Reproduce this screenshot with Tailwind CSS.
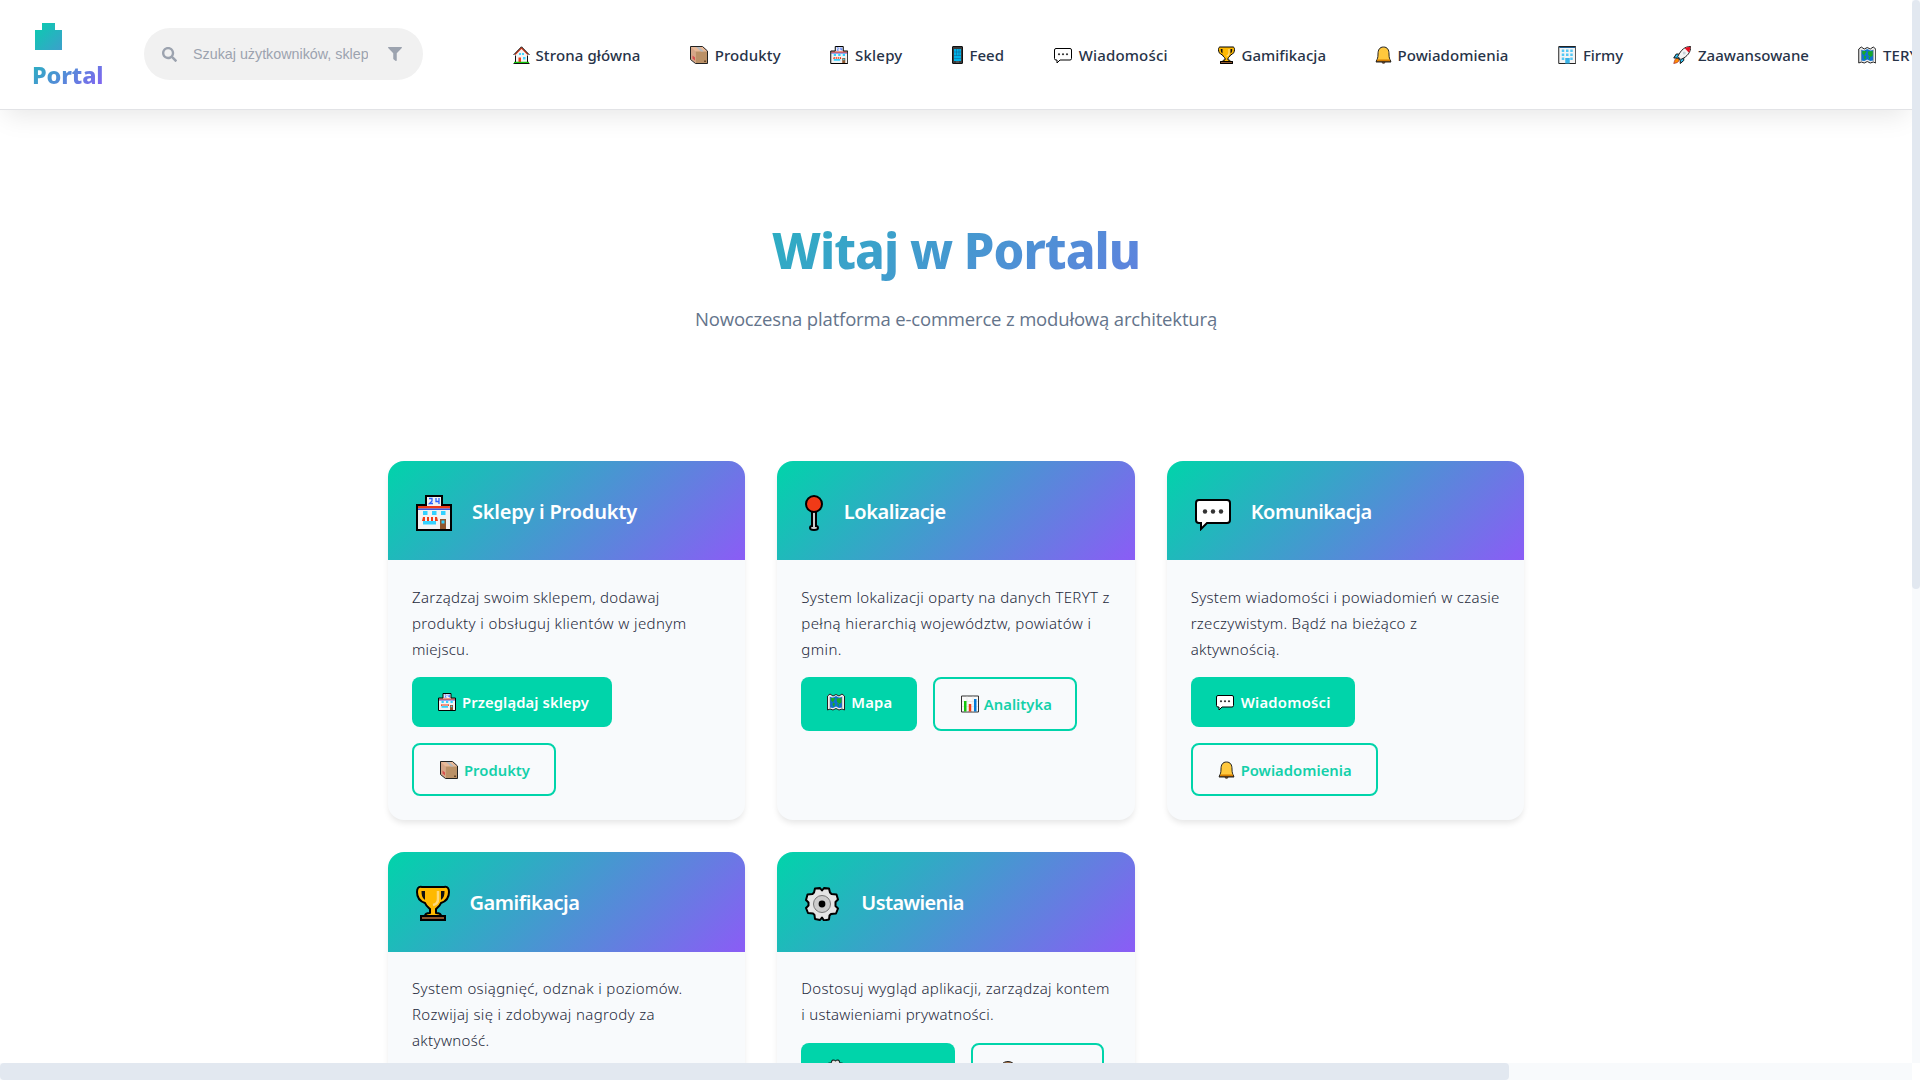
<!DOCTYPE html>
<html lang="pl">
<head>
<meta charset="utf-8">
<title>Portal</title>
<script src="https://cdn.jsdelivr.net/npm/@tailwindcss/browser@4"></script>
</head>
<body class="relative h-[1080px] w-[1920px] overflow-hidden bg-white font-['Open_Sans','Noto_Sans',sans-serif] text-[#1e293b]">

<svg class="hidden" xmlns="http://www.w3.org/2000/svg">
  <symbol id="home" viewBox="0 0 34 36">
    <path d="M5 16v17h24V16L17 4z" fill="#f4f4f4"/><path d="M11 23h5v10h-5z" fill="#f03a17"/><path d="M12 14h4v4h-4zM18 14h4v4h-4zM20 22h5v5h-5z" fill="#41d5ff"/>
    <path d="M2 33h30" stroke="#16c60c" stroke-width="3"/><path d="M4 17 17 4l13 13" fill="none" stroke="#d13415" stroke-width="2.5"/>
    <path d="M5 19v13M29 19v13M1 35h32M1 18 17 1.500l16 16.500" fill="none" stroke="#111" stroke-width="2"/>
  </symbol>
  <symbol id="box" viewBox="0 0 36 36">
    <path d="M1 1h24l10 9v25H12L1 26z" fill="#e8b998"/><path d="M11 11h24v24H11z" fill="#bb9167"/><path d="M1 1v25l10 8V11z" fill="#d6a688"/><path d="m12 2 10 9h6L18 2z" fill="#b4b9bd"/><path d="m5 19 5 4v6l-5-4z" fill="#d95050"/><path d="M28 29h4v3h-4z" fill="#6b4a2b"/>
    <path d="M1 1h24l10 9v25H11L1 27z" fill="none" stroke="#222" stroke-width="2"/>
  </symbol>
  <symbol id="shop" viewBox="0 0 36 36">
    <path d="M1 10h9V1h16v9h9v25H1z" fill="#f2f2f2"/><path d="M2 11h32v2.500H2z" fill="#f03a17"/><path d="M2 13.500h32v1.500H2z" fill="#3a55e0"/>
    <path d="M7 16h4.500v4H7zM16 16h4.500v4H16zM25 16h4.500v4H25zM7 26h13v3.500H7z" fill="#33d1ff"/>
    <path d="M7 22h2v4H6zM11 22h2v4h-2zM15 22h2v4h-2zM19 22h2l1 4h-3z" fill="#f03a17"/><path d="M24 24h6v10h-6z" fill="#8e562e"/><path d="M25.500 25.500h3v3h-3z" fill="#33d1ff"/>
    <path d="M13 3.500h3v2.500l-2.500 2.500H17M20 3v3.500h3.500M23 3v6" fill="none" stroke="#2962ff" stroke-width="1.300"/>
    <path d="M1 10h9V1h16v9h9v25H1z" fill="none" stroke="#000" stroke-width="2"/>
  </symbol>
  <symbol id="phone" viewBox="0 0 22 36">
    <rect x="1" y="1" width="20" height="34" rx="1" fill="#3b3b3b" stroke="#111" stroke-width="2"/><path d="M4 6h14v24H4z" fill="#00b4ea"/><path d="M4 12h14M4 19h14M4 25h14M9 6v13M14 6v13" stroke="#155a86" stroke-width="1"/><path d="M8 32h6" stroke="#999"/>
  </symbol>
  <symbol id="chat" viewBox="0 0 36 36">
    <path d="M4 5h28q3 0 3 3v17q0 3-3 3H12l-6 6v-6H4q-3 0-3-3V8q0-3 3-3z" fill="#fff" stroke="#000" stroke-width="2"/><g fill="#333"><circle cx="10" cy="16.500" r="2.200"/><circle cx="18" cy="16.500" r="2.200"/><circle cx="26" cy="16.500" r="2.200"/></g>
  </symbol>
  <symbol id="cup" viewBox="0 0 34 36">
    <path d="M6 2h22c4-1 5 2 5 5 0 5-2 9-8 11-1 3-4 5-5 6v4c3 0 5 1 5 3h4v4H5v-4h4c0-2 2-3 5-3v-4c-1-1-4-3-5-6C3 16 1 12 1 7c0-3 1-6 5-5z" fill="#ffb900" stroke="#000" stroke-width="2" stroke-linejoin="round"/>
    <path d="M5.500 6c0 4 .5 7 3.500 9V6zM28.500 6c0 4-.5 7-3.500 9V6z" fill="#111"/><path d="M22 6v8q0 5-5 6" fill="none" stroke="#ffd97a" stroke-width="2.500"/><path d="M5 31h24v4H5z" fill="#8e562e" stroke="#000" stroke-width="2"/>
  </symbol>
  <symbol id="bell" viewBox="0 0 34 36">
    <circle cx="17" cy="32" r="3" fill="#8e562e" stroke="#222"/><path d="M17 2c-8 0-11 6-11 14 0 7-1 10-4 15h30c-3-5-4-8-4-15 0-8-3-14-11-14z" fill="#ffc83d" stroke="#222" stroke-width="2" stroke-linejoin="round"/><path d="M3 31h28l-2-4H5z" fill="#d67d00"/><path d="M2 32h30" stroke="#222" stroke-width="2"/>
  </symbol>
  <symbol id="office" viewBox="0 0 36 36">
    <path d="M1 1h34v34H1z" fill="#f4f4f4" stroke="#222" stroke-width="2"/><path d="M2 3h32" stroke="#1b5f95" stroke-width="2"/><g fill="#55c8f5"><path d="M7 7h5v5H7zM15.500 7h5v5h-5zM24 7h5v5h-5zM7 15h5v5H7zM15.500 15h5v5h-5zM24 15h5v5h-5zM7 23h5v5H7zM24 23h5v5h-5z"/><path d="M14 24h9v11h-9z" fill="#3ab4e8"/></g>
  </symbol>
  <symbol id="rocket" viewBox="0 0 36 36">
    <path d="M9 24c-5 0-6 4-8 11 6-1 11-3 11-8z" fill="#ff8c00" stroke="#a33" stroke-width="1.500"/><path d="M10 16H6l-5 8h8l5 5v6l7-6v-6z" fill="#33c5f5" stroke="#111" stroke-width="2"/><path d="M35 1c-12 0-19 6-26 20l6 6C29 21 35 12 35 1z" fill="#f4f4f4" stroke="#222" stroke-width="2"/><path d="M34 2c-5 0-8 1-11 2.500L31 13c2-3 3-7 3-11z" fill="#e81224"/><circle cx="22" cy="14" r="3" fill="#c8d3da"/>
  </symbol>
  <symbol id="map" viewBox="0 0 36 36">
    <path d="m1 6 5-4 6 4 6-3 6 3 6-4 5 4v28l-5-2-6 2-6-3-6 3-6-2-5 2z" fill="#eee" stroke="#222" stroke-width="2"/><path d="m6 8 6 1 6-3 6 3 6-1v21l-6 1-6-3-6 3-6-1z" fill="#0f72d0"/><path d="M8 10h9l-3 5-2 4-4-4zM12 19l4 2-2 7-3-4zM19 11l10-1v9l-4 3-5-4zM20 21l4 1-1 6z" fill="#16a82c"/><path d="M6 7v23M30 7v23" stroke="#777"/>
  </symbol>
  <symbol id="chart" viewBox="0 0 36 36">
    <path d="M1 2h34v32H1z" fill="#fafafa" stroke="#333" stroke-width="2"/><path d="M2 13h32M2 23h32M12 2v32M24 2v32" stroke="#ddd"/><path d="M6 12h5v21H6z" fill="#16c60c"/><path d="M15.500 18h5v15h-5z" fill="#f03a17"/><path d="M26 8h5v25h-5z" fill="#0078d7"/>
  </symbol>
  <symbol id="pin" viewBox="0 0 18 36">
    <path d="M7 16v15q-2 0-2 2 0 2 4 2t4-2q0-2-2-2V16z" fill="#ccc" stroke="#000" stroke-width="2"/><circle cx="9" cy="9" r="8" fill="#f03a17" stroke="#000" stroke-width="2"/>
  </symbol>
  <symbol id="gear" viewBox="0 0 34 34">
    <path fill="#e5e5e5" stroke="#000" stroke-width="2" stroke-linejoin="round" d="M10 1.500 15 1l2 2.500L19 1l5 .5 1 4 1.500 1.500 5 .5 1.500 5-2.500 2.500v4l2.500 2.500-2 5-5 .5-1.500 1.500-.5 4-5 1L17 30.500 15 33l-5-1-.5-4L8 26.500l-5-.5-2-5L3.500 18.500v-3L1 13l1.500-5.500 5-.5L9 5.500z"/><circle cx="17" cy="17" r="8.500" fill="#ccc" stroke="#777"/><circle cx="17" cy="17" r="3.400" fill="#000"/>
  </symbol>
  <symbol id="palette" viewBox="0 0 36 36">
    <path d="M18 1C8 1 1 9 1 18s7 17 15 17c6 0 1-8 6-9h7c8-3 6-25-11-25z" fill="#a9754a" stroke="#222" stroke-width="2"/><circle cx="10" cy="14" r="3" fill="#0078d7"/><circle cx="20" cy="8" r="3" fill="#ffc83d"/>
  </symbol>
</svg>

<header class="relative z-10 flex h-[110px] w-[1912px] items-start overflow-visible border-b border-[#e2e3e6] bg-white shadow-[0_10px_25px_-5px_rgba(0,0,0,0.1)]">
  <a class="ml-8 mt-[21px] block w-[72px] shrink-0 bg-[linear-gradient(135deg,#00d4aa,#8b5cf6)] bg-clip-text text-transparent">
    <svg class="ml-[3px] mt-[2px] block h-[27px] w-[27px]" viewBox="0 0 27 27"><defs><linearGradient id="lg" gradientUnits="userSpaceOnUse" x1="-4" y1="-4" x2="67" y2="67"><stop stop-color="#00d4aa"/><stop offset="1" stop-color="#8b5cf6"/></linearGradient></defs><path d="M7 0h13v7h7v20H0V7h7z" fill="url(#lg)"/></svg>
    <span data-w="71.500" class="mt-[7px] inline-block font-['Noto_Sans','Open_Sans',sans-serif] text-[23.500px] leading-[36px] font-extrabold whitespace-nowrap">Portal</span>
  </a>
  <div class="ml-10 mt-7 flex h-[52px] w-[279px] shrink-0 items-center rounded-[26px] bg-[#f1f1f1] pl-[18px] text-[#9ca3af]">
    <svg class="h-[15px] w-[15px] shrink-0" viewBox="0 0 512 512" fill="currentColor"><path d="M505 442.700 405.300 343c-4.500-4.500-10.600-7-17-7H372c27.600-35.300 44-79.700 44-128C416 93.100 322.900 0 208 0S0 93.100 0 208s93.100 208 208 208c48.300 0 92.700-16.400 128-44v16.300c0 6.400 2.500 12.500 7 17l99.700 99.700c9.400 9.400 24.600 9.400 33.900 0l28.300-28.300c9.400-9.400 9.400-24.600.1-34zM208 336c-70.700 0-128-57.200-128-128 0-70.700 57.200-128 128-128 70.700 0 128 57.200 128 128 0 70.700-57.200 128-128 128z"/></svg>
    <span class="ml-[16px] block w-[175px] overflow-hidden pt-px font-['Liberation_Sans',Arial,sans-serif] text-[14.300px] whitespace-nowrap">Szukaj użytkowników, sklepów</span>
    <svg class="ml-[20px] h-[14px] w-[14px] shrink-0" viewBox="0 0 512 512" fill="currentColor"><path d="M488 0H24C2.700 0-8 25.900 7 41l185 185v206c0 7.800 3.800 15.200 10.200 19.700l80 56C298 518.700 320 507.500 320 488V226L505 41c15-15 4.400-41-17-41z"/></svg>
  </div>
  <nav id="nav" class="ml-[89.700px] mt-[41px] flex h-7 w-[1399px] items-center overflow-hidden font-['Noto_Sans','Open_Sans',sans-serif] text-[15px] font-medium whitespace-nowrap text-[#273348]"></nav>
</header>

<main class="mx-auto flex w-[1136px] -translate-x-1 flex-col">
  <section class="flex h-[351px] flex-col items-center px-8 pt-[102px]">
    <h1 class="w-full bg-[linear-gradient(135deg,#00d4aa,#8b5cf6)] bg-clip-text text-center font-['Noto_Sans','Open_Sans',sans-serif] text-[49px] leading-[77px] font-extrabold whitespace-nowrap text-transparent"><span data-w="368" class="inline-block">Witaj w Portalu</span></h1>
    <p data-w="522" class="mt-[14px] text-[18.500px] leading-[31px] whitespace-nowrap text-[#64748b]">Nowoczesna platforma e-commerce z modułową architekturą</p>
  </section>
  <section id="cards" class="grid grid-cols-3 gap-8"></section>
</main>

<div class="absolute top-0 right-0 z-20 h-[1063px] w-2 bg-[#f8fafc]"><div class="h-[589px] rounded-sm bg-[#e2e8f0]"></div></div>
<div class="absolute bottom-0 left-0 z-20 h-[17px] w-[1912px] bg-[#f8fafc]"><div class="h-full w-[1509px] rounded-sm bg-[#e2e8f0]"></div></div>
<div class="absolute right-0 bottom-0 z-20 h-[17px] w-2 bg-white"></div>

<script>
// [icon, icon width, text offset, item advance, label, label width]
const nav = [
  ['home',17,22.8,177.3,'Strona główna',105],['box',18,24.7,140,'Produkty',66],['shop',18.5,25,122,'Sklepy',47.5],
  ['phone',11,17.5,102,'Feed',34.5],['chat',18,24.7,164,'Wiadomości',89],['cup',17,23.5,157,'Gamifikacja',84.5],
  ['bell',17,22.5,183,'Powiadomienia',111],['office',18.5,25,115,'Firmy',40],['rocket',18.5,25,185,'Zaawansowane',111],['map',18.5,25,80,'TERYT',44]];
const icon = (id, w, h) => `<svg class="block shrink-0" style="width:${w}px;height:${h}px"><use href="#${id}"/></svg>`;
document.getElementById('nav').innerHTML = nav.map(([i,w,o,a,t,tw]) =>
  `<a class="flex shrink-0 items-center" style="width:${a}px"><span class="block shrink-0" style="width:${o}px">${icon(i,w,18)}</span><span data-w="${tw}" class="inline-block">${t}</span></a>`).join('');

// Buttons: [icon, icon width, label, label width, button width, text offset]
const cards = [
  {i:'shop',w:36,h:36,o:56,t:'Sklepy i Produkty',tw:165,l:[['Zarządzaj swoim sklepem, dodawaj',247.500],['produkty i obsługuj klientów w jednym',274.500],['miejscu.',57]],b:[['shop',18,'Przeglądaj sklepy',127,200,24.5],['box',18,'Produkty',66,144,24.5]]},
  {i:'pin',w:18,h:36,o:38.500,t:'Lokalizacje',tw:102,l:[['System lokalizacji oparty na danych TERYT z',308.500],['pełną hierarchią województw, powiatów i',290],['gmin.',40.500]],b:[['map',18,'Mapa',41,116,24.5],['chart',18,'Analityka',68,144,23]]},
  {i:'chat',w:36,h:36,o:56,t:'Komunikacja',tw:121,l:[['System wiadomości i powiadomień w czasie',309],['rzeczywistym. Bądź na bieżąco z',226.500],['aktywnością.',89]],b:[['chat',18,'Wiadomości',90,164,24.5],['bell',17,'Powiadomienia',111,187,22.5]]},
  {i:'cup',w:34,h:36,o:53.500,t:'Gamifikacja',tw:110,l:[['System osiągnięć, odznak i poziomów.',270.500],['Rozwijaj się i zdobywaj nagrody za',243],['aktywność.',77.500]],b:[['cup',17,'Gamifikacja',86,160,24]]},
  {i:'gear',w:34,h:34,o:56,t:'Ustawienia',tw:102.500,l:[['Dostosuj wygląd aplikacji, zarządzaj kontem',308.500],['i ustawieniami prywatności.',192.500]],b:[['gear',17,'Ustawienia',78,154,24.5],['palette',18,'Motywy',58,133,24.5]]}];
document.getElementById('cards').innerHTML = cards.map((c,n) => `
  <article class="flex flex-col overflow-hidden rounded-2xl bg-[#f8fafc] shadow-[0_4px_6px_-1px_rgba(0,0,0,0.1)] ${n<3?'h-[359px]':'h-[361px]'}">
    <div class="flex shrink-0 items-center bg-[linear-gradient(135deg,#00d4aa,#8b5cf6)] pl-7 text-white ${n<3?'h-[99px]':'h-[100px]'}">
      <span class="block shrink-0 ${n==3?'mt-[2px]':'mt-1'}" style="width:${c.o}px">${icon(c.i,c.w,c.h)}</span>
      <h3 data-w="${c.tw}" class="mt-[2px] inline-block font-['Noto_Sans','Open_Sans',sans-serif] text-[20px] leading-7 font-semibold whitespace-nowrap">${c.t}</h3>
    </div>
    <div class="flex flex-col px-6 pb-6 ${n<3?'pt-[25px]':'pt-6'}">
      <div class="font-['Noto_Sans','Open_Sans',sans-serif] text-[15px] leading-[25.840px] font-light text-[#1e293b]">${c.l.map(([t,w])=>`<div class="h-[25.840px]"><span data-w="${w}" class="inline-block whitespace-nowrap">${t}</span></div>`).join('')}</div>
      <div class="mt-[15px] flex flex-wrap gap-4 font-['Noto_Sans','Open_Sans',sans-serif] text-[14.800px] leading-[26px] font-semibold">${c.b.map(([i,iw,t,tw,bw,o],k)=>`
        <a class="flex rounded-lg ${k?(n==1?'h-[54px]':'h-[53px]')+' border-2 border-[#00d4aa] text-[#14d0aa]':'bg-[#00d4aa] text-white min-h-[50px]'} px-[25.500px] pt-3" style="width:${bw}px"><span class="mt-[4px] block shrink-0" style="width:${o}px">${icon(i,iw,18)}</span><span data-w="${tw}" class="inline-block whitespace-nowrap">${t}</span></a>`).join('')}</div>
    </div>
  </article>`).join('');

// Fit every label to its design width by adjusting the tracking.
const fit = () => document.querySelectorAll('[data-w]').forEach(el => {
  el.style.letterSpacing = '0px';
  const r = document.createRange(); r.selectNodeContents(el);
  const w = r.getBoundingClientRect().width;
  el.style.letterSpacing = ((parseFloat(el.dataset.w) - w) / el.textContent.length) + 'px';
});
fit();
addEventListener('load', fit);
document.fonts.ready.then(fit);
document.fonts.addEventListener('loadingdone', fit);
[50, 150, 300, 600].forEach(ms => setTimeout(fit, ms));
</script>
</body>
</html>
